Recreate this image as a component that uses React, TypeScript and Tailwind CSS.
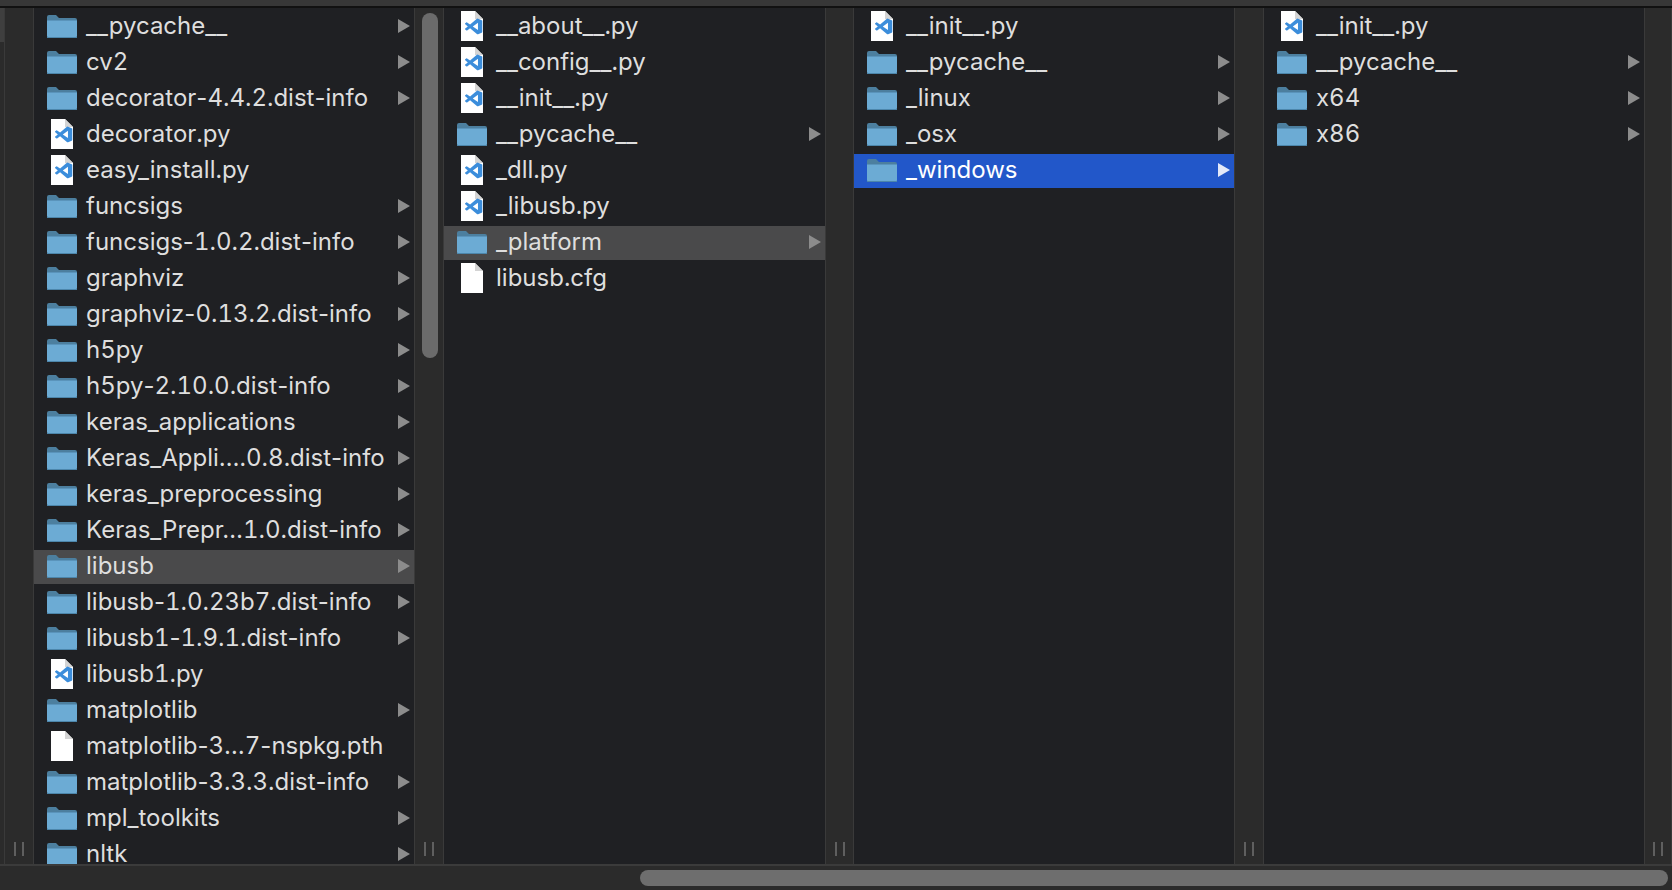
type Item = { name: string; kind: 'folder' | 'code' | 'file'; selected?: 'gray' | 'blue' };

const col1: Item[] = [
  { name: '__pycache__', kind: 'folder' },
  { name: 'cv2', kind: 'folder' },
  { name: 'decorator-4.4.2.dist-info', kind: 'folder' },
  { name: 'decorator.py', kind: 'code' },
  { name: 'easy_install.py', kind: 'code' },
  { name: 'funcsigs', kind: 'folder' },
  { name: 'funcsigs-1.0.2.dist-info', kind: 'folder' },
  { name: 'graphviz', kind: 'folder' },
  { name: 'graphviz-0.13.2.dist-info', kind: 'folder' },
  { name: 'h5py', kind: 'folder' },
  { name: 'h5py-2.10.0.dist-info', kind: 'folder' },
  { name: 'keras_applications', kind: 'folder' },
  { name: 'Keras_Appli….0.8.dist-info', kind: 'folder' },
  { name: 'keras_preprocessing', kind: 'folder' },
  { name: 'Keras_Prepr…1.0.dist-info', kind: 'folder' },
  { name: 'libusb', kind: 'folder', selected: 'gray' },
  { name: 'libusb-1.0.23b7.dist-info', kind: 'folder' },
  { name: 'libusb1-1.9.1.dist-info', kind: 'folder' },
  { name: 'libusb1.py', kind: 'code' },
  { name: 'matplotlib', kind: 'folder' },
  { name: 'matplotlib-3…7-nspkg.pth', kind: 'file' },
  { name: 'matplotlib-3.3.3.dist-info', kind: 'folder' },
  { name: 'mpl_toolkits', kind: 'folder' },
  { name: 'nltk', kind: 'folder' },
];

const col2: Item[] = [
  { name: '__about__.py', kind: 'code' },
  { name: '__config__.py', kind: 'code' },
  { name: '__init__.py', kind: 'code' },
  { name: '__pycache__', kind: 'folder' },
  { name: '_dll.py', kind: 'code' },
  { name: '_libusb.py', kind: 'code' },
  { name: '_platform', kind: 'folder', selected: 'gray' },
  { name: 'libusb.cfg', kind: 'file' },
];

const col3: Item[] = [
  { name: '__init__.py', kind: 'code' },
  { name: '__pycache__', kind: 'folder' },
  { name: '_linux', kind: 'folder' },
  { name: '_osx', kind: 'folder' },
  { name: '_windows', kind: 'folder', selected: 'blue' },
];

const col4: Item[] = [
  { name: '__init__.py', kind: 'code' },
  { name: '__pycache__', kind: 'folder' },
  { name: 'x64', kind: 'folder' },
  { name: 'x86', kind: 'folder' },
];

function FolderIcon() {
  return (
    <svg width="30" height="24" viewBox="0 0 30 24" className="absolute left-[13px] top-[6px]">
      <path d="M0 3a2 2 0 0 1 2-2h7l3 3h16a2 2 0 0 1 2 2v6H0z" fill="#4c7f9f" />
      <path d="M0 7a1 1 0 0 1 1-1h28a1 1 0 0 1 1 1v15a2 2 0 0 1-2 2H2a2 2 0 0 1-2-2z" fill="#6cabd4" />
      <rect x="0" y="23" width="30" height="1" fill="#4c86ab" />
      <rect x="0" y="6" width="30" height="1" fill="#5a94bb" />
    </svg>
  );
}

function DocIcon({ code }: { code: boolean }) {
  return (
    <svg width="22" height="30" viewBox="0 0 22 30" className="absolute left-[17px] top-[3px]">
      <path d="M0 0h14l8 8v22H0z" fill="#ffffff" />
      <path d="M14 0l8 8h-8z" fill="#d4d4d4" />
      {code && (
        <g transform="translate(4 7.5) scale(0.72 0.66)">
          <path
            d="M23.15 2.587L18.21.21a1.494 1.494 0 0 0-1.705.29l-9.46 8.63-4.12-3.128a.999.999 0 0 0-1.276.057L.327 7.261A1 1 0 0 0 .326 8.74L3.899 12 .326 15.26a1 1 0 0 0 .001 1.479L1.65 17.94a.999.999 0 0 0 1.276.057l4.12-3.128 9.46 8.63a1.492 1.492 0 0 0 1.704.29l4.942-2.377A1.5 1.5 0 0 0 24 20.06V3.939a1.5 1.5 0 0 0-.85-1.352zm-5.146 14.861L10.826 12l7.178-5.448v10.896z"
            fill="#3b8ddb"
          />
        </g>
      )}
    </svg>
  );
}

// tabular digits match the reference widths, but Inter's tabular hyphen is too wide
function Name({ text }: { text: string }) {
  const parts = text.split('-');
  return (
    <>
      {parts.map((part, i) => (
        <span key={i}>
          {i > 0 && <span className="normal-nums">-</span>}
          {part}
        </span>
      ))}
    </>
  );
}

function Row({ item }: { item: Item }) {
  const bg = item.selected === 'gray' ? 'bg-[#4a4a4b]' : item.selected === 'blue' ? 'bg-[#2257c9]' : '';
  return (
    <div className="h-9 pt-[2px] shrink-0">
      <div className={`relative h-[34px] ${bg}`}>
        <div className="relative -top-[2px] h-9">
          {item.kind === 'folder' ? <FolderIcon /> : <DocIcon code={item.kind === 'code'} />}
          <span
            className={`absolute left-[52px] top-0 leading-9 text-[24px] tabular-nums whitespace-nowrap ${
              item.selected === 'blue' ? 'text-white' : 'text-[#dedede]'
            }`}
          >
            <Name text={item.name} />
          </span>
          {item.kind === 'folder' && (
            <svg width="12" height="14" viewBox="0 0 12 14" className="absolute right-[4px] top-[11px]">
              <path d="M0 0l12 7-12 7z" fill={item.selected === 'blue' ? '#e3e9f8' : '#8c8c8c'} />
            </svg>
          )}
        </div>
      </div>
    </div>
  );
}

function Column({ items }: { items: Item[] }) {
  return (
    <div className="w-[380px] shrink-0 bg-[#1f2023] flex flex-col overflow-hidden">
      {items.map((item) => (
        <Row key={item.name} item={item} />
      ))}
    </div>
  );
}

function Handle({ width, thumb }: { width: string; thumb?: boolean }) {
  return (
    <div className={`${width} shrink-0 relative bg-[#2b2b2b] border-x border-[#3a3a3a] flex flex-col justify-end items-center pb-[8px]`}>
      {thumb && <div className="absolute left-[7px] top-[5px] w-4 h-[345px] rounded-full bg-[#6b6b6b]" />}
      <div className="flex gap-[6px]">
        <div className="w-[2px] h-[14px] bg-[#5f5f5f]" />
        <div className="w-[2px] h-[14px] bg-[#5f5f5f]" />
      </div>
    </div>
  );
}

export default function App() {
  return (
    <div className="w-[1672px] h-[890px] flex flex-col overflow-hidden bg-[#2b2b2b] font-['Inter',sans-serif]">
      <div className="h-2 shrink-0 bg-[#373737] border-b-2 border-[#111111]" />
      <div className="flex-1 flex min-h-0">
        <div className="w-1 shrink-0 bg-[#2b2b2b]">
          <div className="h-[34px] bg-[#3f3f3f]" />
        </div>
        <Handle width="w-[30px]" />
        <Column items={col1} />
        <Handle width="w-[30px]" thumb />
        <div className="w-[381px] shrink-0 flex flex-col overflow-hidden bg-[#1f2023]">
          {col2.map((item) => (
            <Row key={item.name} item={item} />
          ))}
        </div>
        <Handle width="w-[29px]" />
        <Column items={col3} />
        <Handle width="w-[30px]" />
        <Column items={col4} />
        <Handle width="w-[28px]" />
      </div>
      <div className="h-[26px] shrink-0 bg-[#2b2b2b] border-t-2 border-[#3b3b3b] flex justify-end items-center pr-1">
        <div className="w-[1028px] h-4 rounded-full bg-[#6e6e6e]" />
      </div>
    </div>
  );
}
